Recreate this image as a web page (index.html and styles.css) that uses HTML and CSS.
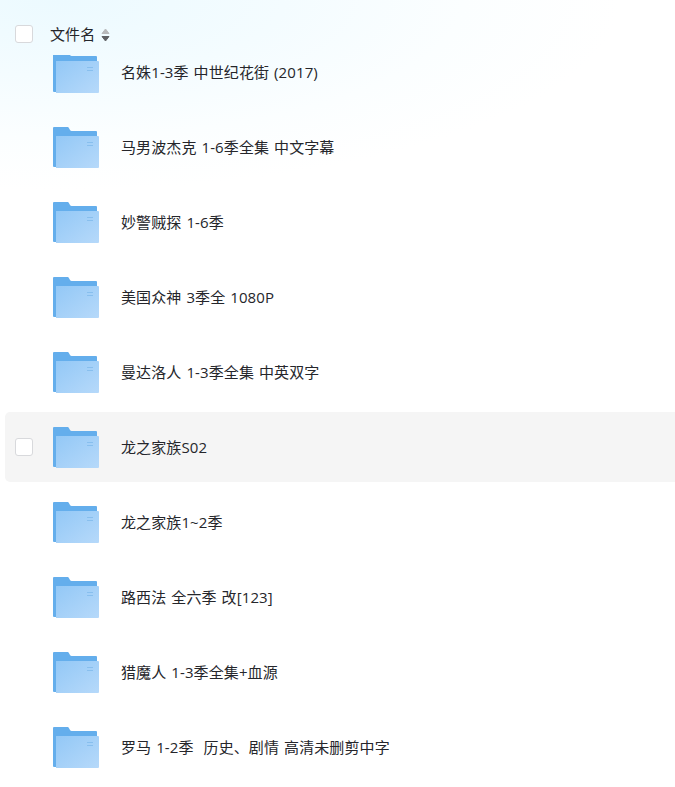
FILE: index.html
```html
<!DOCTYPE html>
<html lang="zh-CN">
<head>
<meta charset="utf-8">
<title>文件列表</title>
<link rel="stylesheet" href="styles.css">
</head>
<body>
<svg class="defs" width="0" height="0" aria-hidden="true">
  <defs>
    <linearGradient id="front" x1="0" y1="0" x2="1" y2="1">
      <stop offset="0" stop-color="#93c8f6"/>
      <stop offset="1" stop-color="#b6d9fa"/>
    </linearGradient>
    <symbol id="folder" viewBox="0 0 46 41">
      <path d="M0 1a1 1 0 0 1 1-1h13.500a1.500 1.500 0 0 1 1.300.7l1.200 2.300a2 2 0 0 0 1.700 1h24.300a1 1 0 0 1 1 1v4H3v31H1a1 1 0 0 1-1-1z" fill="#64aeec"/>
      <path d="M3 9h42a1 1 0 0 1 1 1v30a1 1 0 0 1-1 1H3z" fill="url(#front)"/>
      <path d="M34 15h6v1h-6zM34 18h6v1h-6z" fill="#88bfee"/>
    </symbol>
  </defs>
</svg>
<main class="page">
  <header class="head">
    <span class="check"></span>
    <span class="head-name">文件名</span>
    <svg class="sort" viewBox="0 0 9 14" aria-hidden="true">
      <path class="up" d="M4.500 1 8 5.500H1z"/>
      <path class="down" d="M1 8.500h7L4.500 13z"/>
    </svg>
  </header>
  <div class="list">
    <div class="rows">
      <div class="row"><svg class="icon"><use href="#folder"/></svg><span class="name">名姝1-3季 中世纪花街 (2017)</span></div>
      <div class="row"><svg class="icon"><use href="#folder"/></svg><span class="name">马男波杰克 1-6季全集 中文字幕</span></div>
      <div class="row"><svg class="icon"><use href="#folder"/></svg><span class="name">妙警贼探 1-6季</span></div>
      <div class="row"><svg class="icon"><use href="#folder"/></svg><span class="name">美国众神 3季全 1080P</span></div>
      <div class="row"><svg class="icon"><use href="#folder"/></svg><span class="name">曼达洛人 1-3季全集 中英双字</span></div>
      <div class="row is-hover"><span class="check"></span><svg class="icon"><use href="#folder"/></svg><span class="name">龙之家族S02</span></div>
      <div class="row"><svg class="icon"><use href="#folder"/></svg><span class="name">龙之家族1~2季</span></div>
      <div class="row"><svg class="icon"><use href="#folder"/></svg><span class="name">路西法 全六季 改[123]</span></div>
      <div class="row"><svg class="icon"><use href="#folder"/></svg><span class="name">猎魔人 1-3季全集+血源</span></div>
      <div class="row"><svg class="icon"><use href="#folder"/></svg><span class="name">罗马 1-2季&nbsp; 历史、剧情 高清未删剪中字</span></div>
    </div>
  </div>
</main>
</body>
</html>
```
FILE: styles.css
```css
* { box-sizing: border-box; }
html, body { margin: 0; height: 100%; background: #fff; }
body {
  font-family: "Open Sans", "Noto Sans CJK SC", sans-serif;
  font-size: 15px;
  font-weight: 400;
  word-spacing: 1px;
  letter-spacing: 0.1px;
  color: #25262b;
  overflow: hidden;
}
.defs { position: absolute; }
.page {
  height: 787px;
  overflow: hidden;
  background: radial-gradient(ellipse 560px 190px at 60px 0, #ecfaff 0%, #f4fcff 40%, #fbfeff 72%, #ffffff 100%);
}
.head {
  display: flex;
  align-items: center;
  height: 55px;
  padding: 13px 0 0 15px;
}
.head-name { margin-left: 17px; line-height: 20px; }
.check {
  flex: none;
  width: 18px;
  height: 18px;
  background: #fff;
  border: 1px solid #d8d9dc;
  border-radius: 3px;
}
.sort {
  flex: none;
  width: 9px;
  height: 14px;
  margin: 2px 0 0 6px;
}
.sort path { stroke-width: 1px; stroke-linejoin: round; }
.sort .up { fill: #b8b9bb; stroke: #b8b9bb; }
.sort .down { fill: #606165; stroke: #606165; }
.list { height: 732px; overflow: hidden; }
.rows {
  display: flex;
  flex-direction: column;
  gap: 5px;
  margin: -18px 0 0 5px;
}
.row {
  position: relative;
  display: flex;
  align-items: center;
  flex: none;
  height: 70px;
  padding-left: 48px;
  border-radius: 5px 0 0 5px;
}
.row.is-hover { background: #f5f5f5; }
.row.is-hover .check { position: absolute; left: 10px; top: 26px; }
.icon { flex: none; width: 46px; height: 41px; }
.name { margin-left: 22px; line-height: 20px; white-space: nowrap; }
```
